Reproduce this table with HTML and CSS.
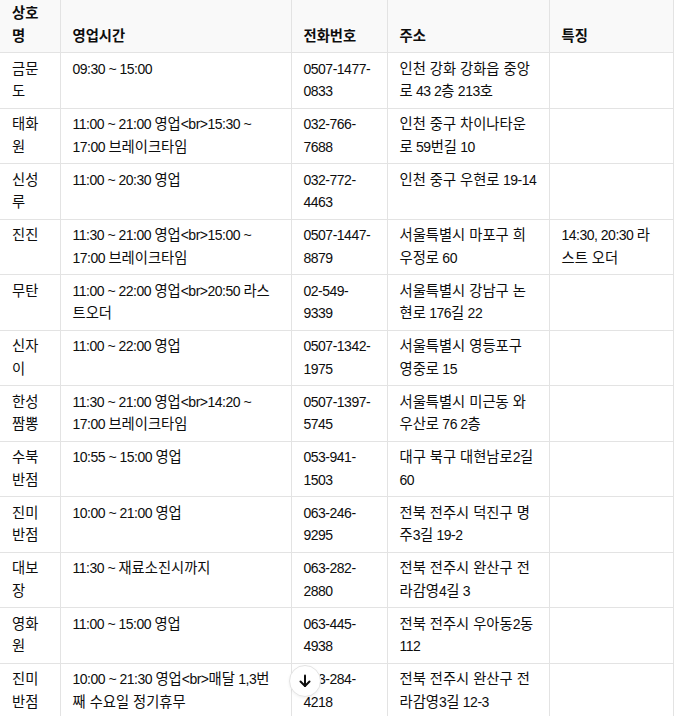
FILE: index.html
```html
<!DOCTYPE html>
<html lang="ko">
<head>
<meta charset="utf-8">
<title>맛집 목록</title>
<link rel="stylesheet" href="styles.css">
</head>
<body>
<div class="wrap">
<table class="list">
  <colgroup>
    <col class="c-name"><col class="c-hours"><col class="c-tel"><col class="c-addr"><col class="c-note">
  </colgroup>
  <thead>
    <tr><th>상호명</th><th>영업시간</th><th>전화번호</th><th>주소</th><th>특징</th></tr>
  </thead>
  <tbody>
    <tr><td class="ko">금문도</td><td>09:30 ~ 15:00</td><td>0507-1477-0833</td><td><span class="ko">인천 강화 강화읍 중앙로</span> 43 2<span class="ko">층</span> 213<span class="ko">호</span></td><td></td></tr>
    <tr><td class="ko">태화원</td><td>11:00 ~ 21:00 <span class="ko">영업</span>&lt;br&gt;15:30 ~ 17:00 <span class="ko">브레이크타임</span></td><td>032-766-7688</td><td><span class="ko">인천 중구 차이나타운로</span> 59<span class="ko">번길</span> 10</td><td></td></tr>
    <tr><td class="ko">신성루</td><td>11:00 ~ 20:30 <span class="ko">영업</span></td><td>032-772-4463</td><td><span class="ko">인천 중구 우현로</span> 19-14</td><td></td></tr>
    <tr><td class="ko">진진</td><td>11:30 ~ 21:00 <span class="ko">영업</span>&lt;br&gt;15:00 ~ 17:00 <span class="ko">브레이크타임</span></td><td>0507-1447-8879</td><td><span class="ko">서울특별시 마포구 희우정로</span> 60</td><td>14:30, 20:30 <span class="ko">라스트 오더</span></td></tr>
    <tr><td class="ko">무탄</td><td>11:00 ~ 22:00 <span class="ko">영업</span>&lt;br&gt;20:50 <span class="ko">라스트오더</span></td><td>02-549-9339</td><td><span class="ko">서울특별시 강남구 논현로</span> 176<span class="ko">길</span> 22</td><td></td></tr>
    <tr><td class="ko">신자이</td><td>11:00 ~ 22:00 <span class="ko">영업</span></td><td>0507-1342-1975</td><td><span class="ko">서울특별시 영등포구 영중로</span> 15</td><td></td></tr>
    <tr><td class="ko">한성짬뽕</td><td>11:30 ~ 21:00 <span class="ko">영업</span>&lt;br&gt;14:20 ~ 17:00 <span class="ko">브레이크타임</span></td><td>0507-1397-5745</td><td><span class="ko">서울특별시 미근동 와우산로</span> 76 2<span class="ko">층</span></td><td></td></tr>
    <tr><td class="ko">수북반점</td><td>10:55 ~ 15:00 <span class="ko">영업</span></td><td>053-941-1503</td><td><span class="ko">대구 북구 대현남로</span>2<span class="ko">길</span> 60</td><td></td></tr>
    <tr><td class="ko">진미반점</td><td>10:00 ~ 21:00 <span class="ko">영업</span></td><td>063-246-9295</td><td><span class="ko">전북 전주시 덕진구 명주</span>3<span class="ko">길</span> 19-2</td><td></td></tr>
    <tr><td class="ko">대보장</td><td>11:30 ~ <span class="ko">재료소진시까지</span></td><td>063-282-2880</td><td><span class="ko">전북 전주시 완산구 전라감영</span>4<span class="ko">길</span> 3</td><td></td></tr>
    <tr><td class="ko">영화원</td><td>11:00 ~ 15:00 <span class="ko">영업</span></td><td>063-445-4938</td><td><span class="ko">전북 전주시 우아동</span>2<span class="ko">동</span> 112</td><td></td></tr>
    <tr><td class="ko">진미반점</td><td>10:00 ~ 21:30 <span class="ko">영업</span>&lt;br&gt;<span class="ko">매달</span> 1,3<span class="ko">번째 수요일 정기휴무</span></td><td>063-284-4218</td><td><span class="ko">전북 전주시 완산구 전라감영</span>3<span class="ko">길</span> 12-3</td><td></td></tr>
  </tbody>
</table>
</div>
<button class="scroll-down" type="button" aria-label="아래로 스크롤">
  <svg width="16" height="16" viewBox="0 0 16 16" fill="none" stroke="#0d0d0d" stroke-width="2" stroke-linecap="round" stroke-linejoin="round">
    <path d="M8 2.5v10.5"/>
    <path d="M3.5 8.5 8 13l4.5-4.5"/>
  </svg>
</button>
</body>
</html>
```

FILE: styles.css
```css
html, body {
  margin: 0;
  padding: 0;
  background: #ffffff;
}

body {
  font-family: "Liberation Sans", "Noto Sans CJK KR", sans-serif;
  font-size: 14px;
  color: #0d0d0d;
  letter-spacing: -0.5px;
}

.wrap {
  width: 673px;
}

.list {
  width: 673px;
  border-collapse: collapse;
  table-layout: fixed;
}

.c-name { width: 60px; }
.c-hours { width: 231px; }
.c-tel { width: 96px; }
.c-addr { width: 162px; }
.c-note { width: 124px; }

.list th,
.list td {
  border: 1px solid #e3e3e3;
  padding: 4.75px 12px;
  line-height: 22.5px;
  text-align: left;
}

.list th:first-child,
.list td:first-child {
  border-left: none;
}

.list thead th {
  border-top: none;
  background: #f9f9f9;
  font-weight: 600;
  font-size: 14.3px;
  letter-spacing: 0;
  vertical-align: bottom;
  padding-top: 2.25px;
}

.list td {
  vertical-align: top;
  font-weight: 400;
}

.list .ko {
  font-size: 14.3px;
  letter-spacing: 0;
}

.scroll-down {
  position: fixed;
  left: 289px;
  top: 665px;
  width: 32px;
  height: 32px;
  padding: 0;
  border: 1px solid #e3e3e3;
  border-radius: 50%;
  background: #ffffff;
  box-shadow: 0 1px 3px rgba(0, 0, 0, 0.06);
  display: flex;
  align-items: center;
  justify-content: center;
}
```
